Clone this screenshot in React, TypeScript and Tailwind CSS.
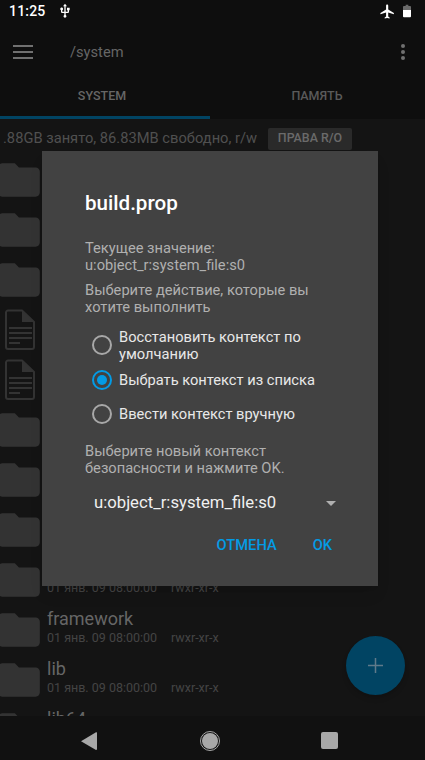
const roboto = "font-['Roboto',sans-serif]";

function Folder() {
  return (
    <svg viewBox="0 0 24 24" className="w-[50px] h-[50px] shrink-0 ml-[-6px] mr-[3px]" fill="#333333">
      <path d="M10 4H4c-1.1 0-2 .9-2 2v12c0 1.1.9 2 2 2h16c1.1 0 2-.9 2-2V8c0-1.1-.9-2-2-2h-8l-2-2z" />
    </svg>
  );
}

function FileDoc() {
  return (
    <svg viewBox="0 0 30 42" className="w-[30px] h-[42px] shrink-0 ml-[5px] mr-[12px]" fill="none">
      <path d="M3 1.5h14L29 13v25a2 2 0 0 1-2 2H3a2 2 0 0 1-2-2V3.500a2 2 0 0 1 2-2z" stroke="#333333" strokeWidth="2" />
      <path d="M17 1.500V13h12z" fill="#333333" />
      <path d="M4 19h23M4 24h23M4 29h23M4 34h11" stroke="#333333" strokeWidth="2" />
    </svg>
  );
}

function Row({ name, date, file }: { name?: string; date?: boolean; file?: boolean }) {
  return (
    <div className="h-[50px] flex items-center shrink-0">
      {file ? <FileDoc /> : <Folder />}
      <div className="flex flex-col">
        <div className="h-[21px] text-[18px] leading-[21px] text-[#666666] mt-[-5px]">{name}</div>
        {date && (
          <div className="flex text-[12.5px] leading-[18px] text-[#444444]">
            <span className="w-[124px]">01 янв. 09 08:00:00</span>
            <span>rwxr-xr-x</span>
          </div>
        )}
      </div>
    </div>
  );
}

function Radio({ checked }: { checked?: boolean }) {
  return (
    <span
      className={
        "w-[20px] h-[20px] rounded-full border-2 flex items-center justify-center shrink-0 " +
        (checked ? "border-[#039be5]" : "border-[#a8a8a8]")
      }
    >
      {checked && <span className="w-[10px] h-[10px] rounded-full bg-[#039be5]" />}
    </span>
  );
}

export default function App() {
  const rows: { name?: string; date?: boolean; file?: boolean }[] = [
    {},
    {},
    {},
    { file: true },
    { file: true },
    {},
    {},
    {},
    { date: true },
    { name: "framework", date: true },
    { name: "lib", date: true },
    { name: "lib64", date: true },
  ];

  return (
    <div className={`relative w-[425px] h-[760px] overflow-hidden flex flex-col bg-[#111111] ${roboto}`}>
      {/* status bar */}
      <div className="h-[24px] shrink-0 bg-[#0e0e0e] flex items-center pb-[2px] pl-[9px] pr-[14px]">
        <span className="text-[14px] font-medium text-white tracking-[0.2px]">11:25</span>
        <svg viewBox="0 0 24 24" className="w-[16px] h-[16px] ml-[11px]" fill="#ffffff">
          <path d="M15 7v4h1v2h-3V5h2l-3-4-3 4h2v8H8v-2.070c.7-.37 1.200-1.080 1.200-1.930 0-1.210-.99-2.200-2.200-2.200-1.210 0-2.200.99-2.200 2.200 0 .85.5 1.560 1.200 1.930V13c0 1.110.89 2 2 2h3v3.050c-.71.37-1.200 1.100-1.200 1.950 0 1.220.99 2.200 2.200 2.200 1.210 0 2.200-.98 2.200-2.200 0-.85-.49-1.580-1.200-1.950V15h3c1.110 0 2-.89 2-2v-2h1V7h-4z" />
        </svg>
        <svg viewBox="0 0 24 24" className="w-[17px] h-[17px] ml-auto" fill="#ffffff">
          <path d="M21 16v-2l-8-5V3.500c0-.83-.67-1.500-1.500-1.500S10 2.670 10 3.500V9l-8 5v2l8-2.500V19l-2 1.500V22l3.500-1 3.500 1v-1.500L13 19v-5.500l8 2.500z" />
        </svg>
        <svg viewBox="0 0 9 14" className="w-[8px] h-[14px] ml-[7px]">
          <path d="M3 0h3v1.500h2a1 1 0 0 1 1 1V6H0V2.500a1 1 0 0 1 1-1h2z" fill="#6a6a6a" />
          <path d="M0 6h9v7a1 1 0 0 1-1 1H1a1 1 0 0 1-1-1z" fill="#ffffff" />
        </svg>
      </div>

      {/* toolbar */}
      <div className="h-[56px] shrink-0 bg-[#0e0e0e] flex items-center relative">
        <div className="ml-[13px] w-[20px] flex flex-col gap-[4px]">
          <span className="h-[2px] bg-[#707070]" />
          <span className="h-[2px] bg-[#707070]" />
          <span className="h-[2px] bg-[#707070]" />
        </div>
        <span className="ml-[37px] text-[14.67px] text-[#666666]">/system</span>
        <div className="ml-auto mr-[20px] flex flex-col gap-[2px]">
          <span className="w-[4px] h-[4px] rounded-full bg-[#707070]" />
          <span className="w-[4px] h-[4px] rounded-full bg-[#707070]" />
          <span className="w-[4px] h-[4px] rounded-full bg-[#707070]" />
        </div>
      </div>

      {/* tabs */}
      <div className="h-[39px] shrink-0 bg-[#0e0e0e] flex">
        <div className="w-[210px] flex flex-col">
          <div className="flex-1 flex items-center justify-center pr-[6px] pb-[4px] text-[12.5px] font-medium text-[#666666]">SYSTEM</div>
          <div className="h-[3px] bg-[#014463]" />
        </div>
        <div className="flex-1 flex items-center justify-center pb-[7px] pr-[1px] text-[12.5px] font-medium text-[#5a5a5a]">ПАМЯТЬ</div>
      </div>

      {/* list */}
      <div className="flex-1 min-h-0 overflow-hidden bg-[#141414] flex flex-col">
        <div className="h-[36px] shrink-0 flex items-center pl-[3px] pt-[2px]">
          <span className="text-[14.7px] text-[#505050] w-[265px] whitespace-nowrap">.88GB занято, 86.83MB свободно, r/w</span>
          <span className="w-[84px] h-[22px] mt-[1px] rounded-[2px] bg-[#2a2a2a] flex items-center justify-center text-[12.4px] font-medium text-[#6a6a6a]">ПРАВА R/O</span>
        </div>
        {rows.map((r, i) => (
          <Row key={i} name={r.name} date={r.date} file={r.file} />
        ))}
      </div>

      {/* nav */}
      <div className="h-[44px] shrink-0 bg-[#111111] flex items-center pt-[5px]">
        <svg viewBox="0 0 16 18" className="w-[16px] h-[18px] ml-[81px]" fill="#a8a8a8">
          <path d="M16 .5V17a1 1 0 0 1-1 1L0 9.200 15 .2a1 1 0 0 1 1 .3z" />
        </svg>
        <span className="ml-[103px] w-[20px] h-[20px] rounded-full border border-[#a8a8a8] flex items-center justify-center">
          <span className="w-[16px] h-[16px] rounded-full bg-[#a8a8a8]" />
        </span>
        <span className="ml-[101px] w-[17px] h-[17px] rounded-[2px] bg-[#a8a8a8]" />
      </div>

      {/* FAB */}
      <div className="absolute left-[346px] top-[636px] w-[59px] h-[59px] rounded-full bg-[#014463] shadow-md flex items-center justify-center">
        <svg viewBox="0 0 16 16" className="w-[15px] h-[15px]" stroke="#5f7a8a" strokeWidth="1.6" fill="none">
          <path d="M8 0v16M0 8h16" />
        </svg>
      </div>

      {/* dialog */}
      <div className="absolute left-[42px] top-[151px] w-[336px] h-[435px] bg-[#424242] shadow-lg pl-[43px] pr-[24px] pt-[39px] flex flex-col">
        <div className="text-[20.6px] leading-[26px] font-medium text-white">build.prop</div>
        <div className="mt-[24px] text-[14.67px] leading-[17px] text-[#b0b0b0]">
          <div>Текущее значение:</div>
          <div>u:object_r:system_file:s0</div>
        </div>
        <div className="mt-[8px] text-[14.67px] leading-[17px] text-[#b0b0b0]">
          Выберите действие, которые вы
          <br />
          хотите выполнить
        </div>
        <div className="mt-[11px] ml-[7px] flex flex-col text-[14.67px] leading-[17px] text-[#e8e8e8]">
          <div className="h-[36px] flex items-center gap-[7px]">
            <Radio />
            <span className="mt-[1px]">
              Восстановить контекст по
              <br />
              умолчанию
            </span>
          </div>
          <div className="h-[32px] mt-[1px] flex items-center gap-[7px]">
            <Radio checked />
            <span>Выбрать контекст из списка</span>
          </div>
          <div className="h-[32px] mt-[2px] flex items-center gap-[7px]">
            <Radio />
            <span>Ввести контекст вручную</span>
          </div>
        </div>
        <div className="mt-[13px] text-[14.67px] leading-[17px] text-[#b0b0b0]">
          Выберите новый контекст
          <br />
          безопасности и нажмите OK.
        </div>
        <div className="mt-[9px] ml-[9px] h-[34px] flex items-center text-[16.7px] text-[#f0f0f0]">
          <span>u:object_r:system_file:s0</span>
          <span className="ml-[50px] w-0 h-0 border-l-[5px] border-r-[5px] border-t-[5px] border-l-transparent border-r-transparent border-t-[#b0b0b0]" />
        </div>
        <div className="mt-[7px] flex justify-end gap-[36px] pr-[22px] text-[14.67px] leading-[36px] font-medium text-[#039be5]">
          <span>ОТМЕНА</span>
          <span>OK</span>
        </div>
      </div>
    </div>
  );
}
